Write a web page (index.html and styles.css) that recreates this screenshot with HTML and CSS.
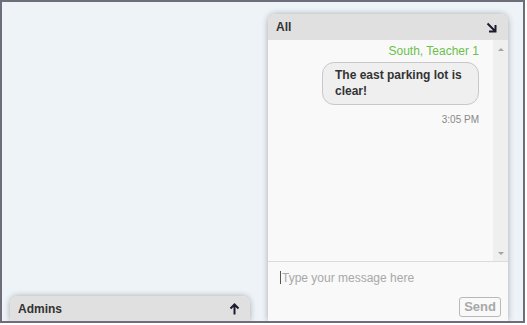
FILE: index.html
```html
<!DOCTYPE html>
<html lang="en">
<head>
    <meta charset="UTF-8">
    <meta name="viewport" content="width=device-width, initial-scale=1.0">
    <title>Chat</title>
    <link rel="stylesheet" href="styles.css">
</head>
<body>
    <div class="frame">
        <div class="panel admins">
            <div class="panel-head">
                <span>Admins</span>
                <svg class="icon" width="11" height="12" viewBox="0 0 11 12">
                    <path d="M5.5 11.5V1.5M1.5 5.5L5.5 1.5L9.5 5.5" fill="none" stroke="#1b1b2e" stroke-width="2"/>
                </svg>
            </div>
        </div>
        <div class="panel chat">
            <div class="panel-head">
                <span>All</span>
                <svg class="icon" width="11" height="11" viewBox="0 0 11 11">
                    <path d="M1.5 1.5L9 9M3 9.5H9.5V3" fill="none" stroke="#1b1b2e" stroke-width="2"/>
                </svg>
            </div>
            <div class="messages">
                <div class="list">
                    <div class="msg">
                        <div class="sender">South, Teacher 1</div>
                        <div class="bubble">The east parking lot is clear!</div>
                        <div class="time">3:05 PM</div>
                    </div>
                </div>
                <div class="scrollbar">
                    <span class="arrow up"></span>
                    <span class="arrow down"></span>
                </div>
            </div>
            <div class="compose">
                <div class="input"><span class="caret"></span>Type your message here</div>
                <div class="actions">
                    <button type="button">Send</button>
                </div>
            </div>
        </div>
    </div>
</body>
</html>
```

FILE: styles.css
```css
body {
    margin: 0;
    background-color: white;
    font-family: "Liberation Sans", Arial, sans-serif;
}
.frame {
    width: 525px;
    height: 323px;
    box-sizing: border-box;
    border: 2px solid #6e6e7a;
    background-color: #eef3f8;
    display: flex;
    align-items: flex-end;
    overflow: hidden;
}
.panel {
    width: 240px;
    background-color: #f9f9f9;
    border-radius: 8px 8px 0 0;
    box-shadow: 0 0 6px rgba(0, 0, 0, 0.3);
    display: flex;
    flex-direction: column;
}
.admins {
    margin-left: 8px;
    height: 25px;
}
.chat {
    margin-left: 18px;
    height: 307px;
}
.panel-head {
    height: 26px;
    flex-shrink: 0;
    display: flex;
    align-items: center;
    justify-content: space-between;
    padding: 0 11px 0 8px;
    background-color: #e0e0e0;
    border-radius: 8px 8px 0 0;
    font-size: 12px;
    font-weight: bold;
    color: #333;
}
.admins .panel-head {
    height: 25px;
    padding-right: 10px;
}
.messages {
    height: 221px;
    display: flex;
    border-bottom: 1px solid #dcdcdc;
}
.list {
    flex: 1;
    padding: 4px 14px 0 8px;
}
.msg {
    display: flex;
    flex-direction: column;
    align-items: flex-end;
}
.sender {
    font-size: 12px;
    color: #6cc04a;
    line-height: 15px;
    margin-bottom: 3px;
}
.bubble {
    width: 131px;
    padding: 4px 12px 5px;
    background-color: #efefef;
    border: 1px solid #c8c8c8;
    border-radius: 12px;
    font-size: 12px;
    font-weight: bold;
    line-height: 16px;
    color: #333;
}
.time {
    font-size: 10px;
    color: #888;
    margin-top: 9px;
}
.scrollbar {
    width: 15px;
    background-color: #efefef;
    display: flex;
    flex-direction: column;
    justify-content: space-between;
    align-items: center;
    padding: 8px 0 6px;
}
.arrow {
    width: 0;
    height: 0;
    border-left: 3px solid transparent;
    border-right: 3px solid transparent;
}
.up {
    border-bottom: 3px solid #a3a3a3;
}
.down {
    border-top: 3px solid #a3a3a3;
}
.compose {
    flex: 1;
    padding: 8px 7px 0 12px;
}
.input {
    display: flex;
    align-items: center;
    font-size: 12px;
    color: #a8a8a8;
    height: 15px;
}
.caret {
    width: 1px;
    height: 13px;
    background-color: #555;
    margin-right: 1px;
}
.actions {
    display: flex;
    justify-content: flex-end;
    margin-top: 12px;
}
button {
    font-family: "Liberation Sans", Arial, sans-serif;
    font-size: 13px;
    font-weight: bold;
    color: #a8a8a8;
    background-color: transparent;
    border: 1px solid #b8b8b8;
    border-radius: 3px;
    padding: 1px 4px;
    height: 20px;
    line-height: 16px;
}
```
